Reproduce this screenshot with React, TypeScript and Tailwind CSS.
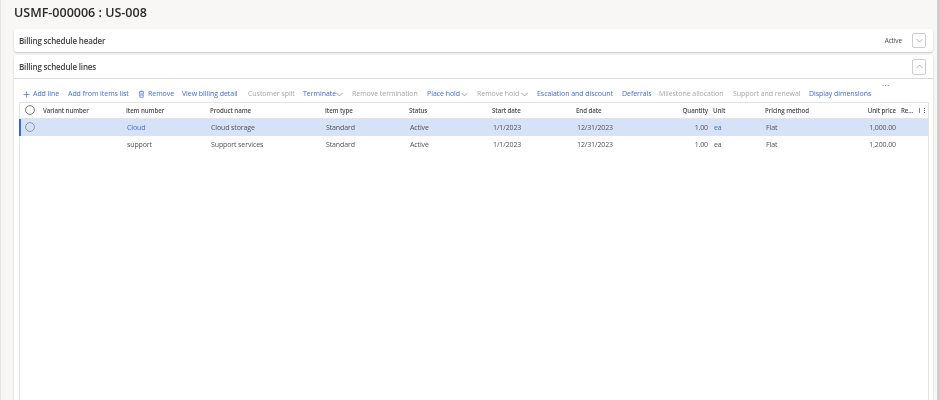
import React from "react";

const Chev = ({ up = false, className = "" }: { up?: boolean; className?: string }) => (
  <svg viewBox="0 0 12 8" className={className} fill="none" stroke="currentColor" strokeWidth="1.1">
    <path d={up ? "M1 6.5 L6 1.5 L11 6.5" : "M1 1.5 L6 6.5 L11 1.5"} />
  </svg>
);

const Circle = ({ c = "#8a8886" }: { c?: string }) => (
  <svg viewBox="0 0 12 12" className="w-[10px] h-[10px]" fill="none" stroke={c} strokeWidth="1">
    <circle cx="6" cy="6" r="5.3" />
  </svg>
);

const cols = "grid grid-cols-[23px_83px_84px_115px_84px_83px_84px_84px_48px_5px_52px_80px_51px_5px_1fr]";

const Tool = ({ t, off, w, chev }: { t: string; off?: boolean; w: number; chev?: boolean }) => (
  <div className={`flex items-center gap-[2px] ${off ? "text-[#a8a6a4]" : "text-[#3f6bdc]"}`}>
    <span style={{ width: w }} className="whitespace-nowrap">{t}</span>
    {chev && <Chev className="w-[7px] h-[5px] text-[#6f7484]" />}
  </div>
);

const Row = ({ sel, item, product, qty, price }: { sel?: boolean; item: string; product: string; qty: string; price: string }) => (
  <div className={`${cols} h-[17px] items-center relative text-[#555352] ${sel ? "bg-[#d5e2f8]" : "bg-white"}`}>
    {sel && <div className="absolute -left-[1px] top-0 bottom-0 w-[2px] bg-[#2f6be0]" />}
    <div className="pl-[5px] flex items-center">{sel && <Circle />}</div>
    <div />
    <div className={sel ? "text-[#3f6bdc]" : ""}><div className="pl-[1px] pt-[2px]">{item}</div></div>
    <div className="pl-[1px] pt-[2px]">{product}</div>
    <div className="pl-[1px] pt-[2px]">Standard</div>
    <div className="pl-[1px] pt-[2px]">Active</div>
    <div className="pl-[1px] pt-[2px]">1/1/2023</div>
    <div className="pl-[1px] pt-[2px]">12/31/2023</div>
    <div className="text-right pt-[2px]">{qty}</div>
    <div />
    <div className={`pl-[1px] pt-[2px] ${sel ? "text-[#3f6bdc]" : ""}`}>ea</div>
    <div className="pl-[1px] pt-[2px]">Flat</div>
    <div className="text-right pt-[2px]">{price}</div>
    <div />
    <div />
  </div>
);

export default function App() {
  return (
    <div className="w-[940px] h-[400px] overflow-hidden bg-[#f8f7f5] border-l border-l-[#e4e2e0] border-r-[3px] border-r-[#d0cecc] flex flex-col pl-[13px] pr-[4px] text-[7px] tracking-[-0.12px] font-['Open_Sans','Noto_Sans',sans-serif] blur-[0.35px]">
      <div className="h-[29px] shrink-0 pt-[3px] text-[12.5px] leading-[20px] font-semibold tracking-normal text-[#2b2a29]">USMF-000006 : US-008</div>
      <div className="h-[23px] shrink-0 bg-white rounded-[3px] shadow-[0_1px_2px_rgba(0,0,0,0.2)] flex items-center pl-[5px] pr-[7px]">
        <span className="text-[8px] font-semibold tracking-[-0.15px] text-[#3f3e3d]">Billing schedule header</span>
        <span className="ml-auto mr-[10px] text-[6.5px] text-[#4a4847]">Active</span>
        <div className="w-[14px] h-[15px] border border-[#d0cecc] rounded-[2px] flex items-center justify-center"><Chev className="w-[7px] h-[5px] text-[#8a8886]" /></div>
      </div>
      <div className="mt-[3px] flex-1 bg-white rounded-t-[3px] shadow-[0_1px_2px_rgba(0,0,0,0.2)] flex flex-col">
        <div className="h-[24px] shrink-0 border-b border-b-[#dcdad8] flex items-center justify-between pl-[5px] pr-[7px]">
          <span className="text-[8px] font-semibold tracking-[-0.15px] pt-[1px] text-[#3f3e3d]">Billing schedule lines</span>
          <div className="w-[14px] h-[16px] border border-[#d0cecc] rounded-[2px] flex items-center justify-center"><Chev up className="w-[7px] h-[5px] text-[#8a8886]" /></div>
        </div>
        <div className="h-[23px] shrink-0 flex items-center pl-[9px] pt-[7px] gap-[9px] tracking-[-0.05px] relative">
          <div className="flex items-center gap-[3px] text-[#3f6bdc]">
            <svg viewBox="0 0 8 8" className="w-[7px] h-[7px]" fill="none" stroke="currentColor" strokeWidth="0.8"><path d="M4 0.5V7.5M0.5 4H7.5" /></svg>
            <span className="w-[26px] whitespace-nowrap">Add line</span>
          </div>
          <Tool t="Add from items list" w={61} />
          <div className="flex items-center gap-[3px] text-[#3f6bdc]">
            <svg viewBox="0 0 8 9" className="w-[7px] h-[8px]" fill="none" stroke="currentColor" strokeWidth="0.7"><path d="M1 2H7M3 2V1H5V2M1.7 2L2 8.3H6L6.3 2M3.3 3.5V7M4.7 3.5V7" /></svg>
            <span className="w-[25px] whitespace-nowrap">Remove</span>
          </div>
          <Tool t="View billing detail" w={57} />
          <Tool t="Customer split" w={46} off />
          <Tool t="Terminate" w={31} chev />
          <Tool t="Remove termination" w={66} off />
          <Tool t="Place hold" w={32} chev />
          <Tool t="Remove hold" w={42} off chev />
          <Tool t="Escalation and discount" w={76} />
          <Tool t="Deferrals" w={28} />
          <Tool t="Milestone allocation" w={65} off />
          <Tool t="Support and renewal" w={67} off />
          <Tool t="Display dimensions" w={61} />
          <span className="absolute left-[868px] top-[-1px] text-[8px] leading-[10px] tracking-[0.5px] text-[#3f6bdc]">...</span>
        </div>
        <div className="flex-1 ml-[5px] mr-[4px] border-l border-r border-t border-[#e6e4e2] flex flex-col">
          <div className={`${cols} h-[15.5px] shrink-0 items-center border-b border-b-[#e6e4e2] font-semibold text-[6.2px] tracking-[-0.1px] whitespace-nowrap text-[#4f4d4b]`}>
            <div className="pl-[5px] flex items-center"><Circle c="#605e5c" /></div>
            <div>Variant number</div>
            <div>Item number</div>
            <div>Product name</div>
            <div>Item type</div>
            <div>Status</div>
            <div>Start date</div>
            <div>End date</div>
            <div className="text-right">Quantity</div>
            <div />
            <div>Unit</div>
            <div>Pricing method</div>
            <div className="text-right">Unit price</div>
            <div />
            <div className="flex items-center justify-between pr-[3px]">
              <span>Re...</span>
              <span className="flex items-center gap-[4px]">
                <span className="w-[1px] h-[5px] bg-[#c8703a]" />
                <span className="flex flex-col gap-[1px]">
                  <span className="w-[1px] h-[1px] bg-[#605e5c]" />
                  <span className="w-[1px] h-[1px] bg-[#605e5c]" />
                  <span className="w-[1px] h-[1px] bg-[#605e5c]" />
                </span>
              </span>
            </div>
          </div>
          <Row sel item="Cloud" product="Cloud storage" qty="1.00" price="1,000.00" />
          <Row item="support" product="Support services" qty="1.00" price="1,200.00" />
        </div>
      </div>
    </div>
  );
}
